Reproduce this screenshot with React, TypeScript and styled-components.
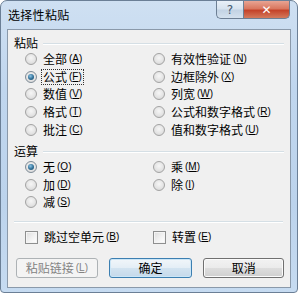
import React from "react";
import styled, { createGlobalStyle, css } from "styled-components";

const Global = createGlobalStyle`
  html, body { margin: 0; padding: 0; background: #ffffff; }
  body { width: 298px; height: 293px; overflow: hidden; }
  * { box-sizing: border-box; }
`;

const FONT = `"Noto Sans CJK SC", "Liberation Sans", sans-serif`;

const Window = styled.div`
  width: 298px;
  height: 293px;
  display: flex;
  flex-direction: column;
  border: 1px solid #6b7f96;
  border-radius: 7px 7px 4px 4px;
  background: linear-gradient(180deg, #cfe0f2 0%, #c0d6ee 30%, #bcd3ec 70%, #c6dbf1 100%);
  padding: 0 6px 4px 6px;
  font-family: ${FONT};
  font-size: 12px;
  color: #000;
  overflow: hidden;
`;

const TitleBar = styled.div`
  height: 28px;
  display: flex;
  align-items: flex-start;
  justify-content: space-between;
  flex: none;
`;

const Title = styled.div`
  padding-top: 7px;
  padding-left: 1px;
  font-size: 12px;
  line-height: 14px;
  color: #000;
  letter-spacing: 0.3px;
`;

const Caps = styled.div`
  display: flex;
  margin-right: 1px;
`;

const CapButton = styled.div<{ $close?: boolean }>`
  height: 18px;
  display: flex;
  align-items: center;
  justify-content: center;
  border: 1px solid #6d7f94;
  border-top: none;
  font-family: "DejaVu Sans", sans-serif;
  ${(p) =>
    p.$close
      ? css`
          width: 47px;
          border-radius: 0 0 5px 0;
          background: linear-gradient(180deg, #e8a493 0%, #d9775f 45%, #c4432a 55%, #d47a5c 100%);
          color: #fff;
          font-weight: bold;
          font-size: 12px;
        `
      : css`
          width: 27px;
          border-right: none;
          border-radius: 0 0 0 5px;
          background: linear-gradient(180deg, #e9f0f8 0%, #d7e3ef 45%, #c3d3e4 55%, #d4e1ee 100%);
          color: #44586e;
          font-size: 12px;
        `}
`;

const Client = styled.div`
  flex: 1;
  background: #f0f0f0;
  border: 1px solid #8a99aa;
  display: flex;
  flex-direction: column;
  padding: 6px 6px 0 6px;
`;

const GroupHeader = styled.div`
  display: flex;
  align-items: center;
  gap: 5px;
  height: 14px;
  line-height: 14px;
  flex: none;
  &::after {
    content: "";
    flex: 1;
    height: 1px;
    margin-top: 1px;
    background: #d5dfe5;
    border-bottom: 1px solid #ffffff;
  }
`;

const OptionGrid = styled.div<{ $rows: number; $rowH: number }>`
  display: grid;
  grid-template-columns: 128px 1fr;
  grid-template-rows: repeat(${(p) => p.$rows}, ${(p) => p.$rowH}px);
  grid-auto-flow: column;
  padding-left: 11px;
  flex: none;
`;

const Option = styled.div`
  display: flex;
  align-items: center;
  gap: 5px;
  white-space: nowrap;
`;

const Radio = styled.span<{ $on?: boolean }>`
  width: 12px;
  height: 12px;
  border-radius: 50%;
  border: 1px solid #a3a3a3;
  background: radial-gradient(circle at 50% 40%, #f6f6f6 0%, #e4e4e4 55%, #cfcfcf 100%);
  display: flex;
  align-items: center;
  justify-content: center;
  flex: none;
  ${(p) =>
    p.$on &&
    css`
      border-color: #7e8b96;
      &::after {
        content: "";
        width: 6px;
        height: 6px;
        border-radius: 50%;
        background: radial-gradient(circle at 40% 35%, #8cc4e6 0%, #2f6e95 55%, #1c4a6a 100%);
      }
    `}
`;

const Check = styled.span`
  width: 13px;
  height: 13px;
  border: 1px solid #8e8f8f;
  background: linear-gradient(135deg, #dcdcdc 0%, #f4f4f4 60%, #ffffff 100%);
  box-shadow: inset 0 0 0 1px #f4f4f4;
  flex: none;
`;

const Label = styled.span<{ $focus?: boolean }>`
  display: inline-flex;
  align-items: center;
  line-height: 14px;
  padding: 0 1px;
  ${(p) =>
    p.$focus &&
    css`
      outline: 1px dotted #333;
      outline-offset: 0;
    `}
`;

const Key = styled.span`
  font-size: 10px;
  margin-left: 2px;
  font-family: "Liberation Sans", sans-serif;
  & u {
    text-decoration: underline;
    text-underline-offset: 1px;
  }
`;

const Spacer = styled.div<{ $h: number }>`
  height: ${(p) => p.$h}px;
  flex: none;
`;

const Separator = styled.div`
  height: 2px;
  flex: none;
  margin: 0 1px 0 0;
  border-top: 1px solid #d5dfe5;
  border-bottom: 1px solid #ffffff;
`;

const CheckRow = styled.div`
  display: grid;
  grid-template-columns: 128px 1fr;
  padding-left: 11px;
  height: 17px;
  flex: none;
`;

const ButtonRow = styled.div`
  display: flex;
  gap: 11px;
  padding-left: 2px;
  flex: none;
`;

const Button = styled.div<{ $variant?: "default" | "disabled"; $w: number }>`
  width: ${(p) => p.$w}px;
  height: 20px;
  display: flex;
  align-items: center;
  justify-content: center;
  border-radius: 3px;
  border: 1px solid #707070;
  background: linear-gradient(180deg, #f2f2f2 0%, #ebebeb 48%, #dddddd 52%, #cfcfcf 100%);
  box-shadow: inset 0 0 0 1px #fbfbfb;
  color: #000;
  ${(p) =>
    p.$variant === "default" &&
    css`
      border-color: #3c7fb1;
      background: linear-gradient(180deg, #f1f6fa 0%, #e4eef6 48%, #d2e3f0 52%, #c5d9ea 100%);
      box-shadow: inset 0 0 0 1px #cbe6f7;
    `}
  ${(p) =>
    p.$variant === "disabled" &&
    css`
      border-color: #adb2b5;
      background: #f4f4f4;
      box-shadow: none;
      color: #838383;
    `}
`;

const KeyLabel = ({ text, k }: { text: string; k: string }) => (
  <>
    {text}
    <Key>
      (<u>{k}</u>)
    </Key>
  </>
);

type Opt = { text: string; k: string; on?: boolean; focus?: boolean };

const pasteOpts: Opt[] = [
  { text: "全部", k: "A" },
  { text: "公式", k: "F", on: true, focus: true },
  { text: "数值", k: "V" },
  { text: "格式", k: "T" },
  { text: "批注", k: "C" },
  { text: "有效性验证", k: "N" },
  { text: "边框除外", k: "X" },
  { text: "列宽", k: "W" },
  { text: "公式和数字格式", k: "R" },
  { text: "值和数字格式", k: "U" },
];

const opOpts: (Opt | null)[] = [
  { text: "无", k: "O", on: true },
  { text: "加", k: "D" },
  { text: "减", k: "S" },
  { text: "乘", k: "M" },
  { text: "除", k: "I" },
  null,
];

export default function App() {
  return (
    <>
      <Global />
      <Window>
        <TitleBar>
          <Title>选择性粘贴</Title>
          <Caps>
            <CapButton>?</CapButton>
            <CapButton $close>✕</CapButton>
          </Caps>
        </TitleBar>
        <Client>
          <GroupHeader>粘贴</GroupHeader>
          <OptionGrid $rows={5} $rowH={17.7}>
            {pasteOpts.map((o) => (
              <Option key={o.text}>
                <Radio $on={o.on} />
                <Label $focus={o.focus}>
                  <KeyLabel text={o.text} k={o.k} />
                </Label>
              </Option>
            ))}
          </OptionGrid>
          <Spacer $h={6} />
          <GroupHeader>运算</GroupHeader>
          <OptionGrid $rows={3} $rowH={17.5}>
            {opOpts.map((o, i) =>
              o ? (
                <Option key={o.text}>
                  <Radio $on={o.on} />
                  <Label>
                    <KeyLabel text={o.text} k={o.k} />
                  </Label>
                </Option>
              ) : (
                <div key={i} />
              )
            )}
          </OptionGrid>
          <Spacer $h={10} />
          <Separator />
          <Spacer $h={6} />
          <CheckRow>
            <Option>
              <Check />
              <Label>
                <KeyLabel text="跳过空单元" k="B" />
              </Label>
            </Option>
            <Option>
              <Check />
              <Label>
                <KeyLabel text="转置" k="E" />
              </Label>
            </Option>
          </CheckRow>
          <Spacer $h={12} />
          <ButtonRow>
            <Button $variant="disabled" $w={82}>
              <KeyLabel text="粘贴链接" k="L" />
            </Button>
            <Button $variant="default" $w={84}>
              确定
            </Button>
            <Button $w={81}>取消</Button>
          </ButtonRow>
        </Client>
      </Window>
    </>
  );
}
